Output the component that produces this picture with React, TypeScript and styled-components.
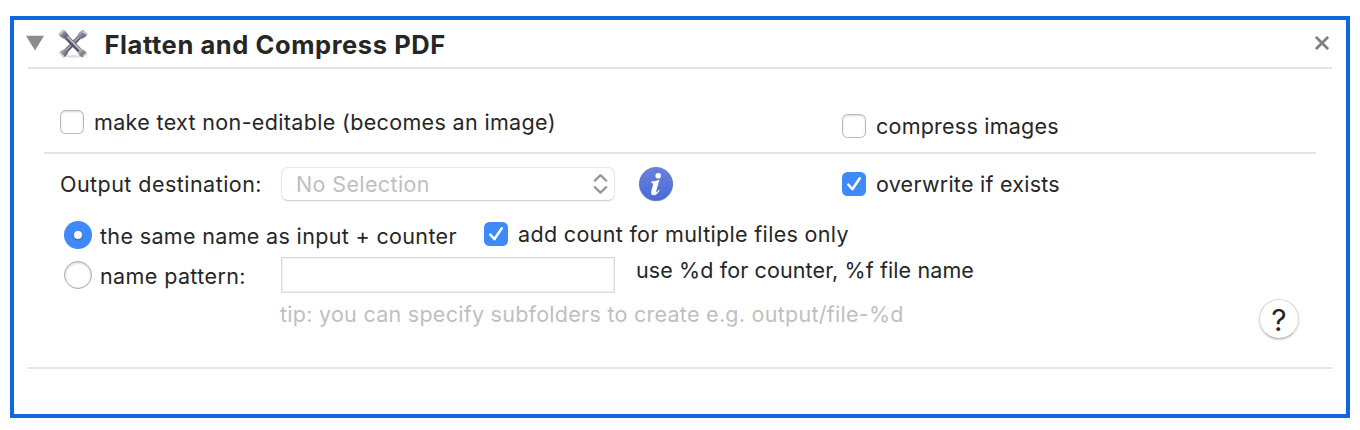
import React from "react";
import styled, { createGlobalStyle } from "styled-components";

const GlobalStyle = createGlobalStyle`
  * { box-sizing: border-box; }
  body {
    margin: 0;
    background: #fff;
    font-family: Inter, "Liberation Sans", sans-serif;
    color: #262626;
  }
`;

const Page = styled.main`
  height: 430px;
  padding: 16px 10px 12px;
`;

const Panel = styled.section`
  height: 402px;
  padding: 0 14px;
  border: 4px solid #1068e0;
  background: #fff;
`;

const Header = styled.header`
  display: flex;
  align-items: center;
  height: 49px;
  border-bottom: 2px solid #e4e4e4;
`;

const Disclosure = styled.svg`
  display: block;
  width: 18px;
  height: 16px;
  margin: 0 13px 1px -2px;
`;

const ToolIcon = styled.svg`
  display: block;
  width: 30px;
  height: 30px;
  margin: 0 16.5px 0 1px;
`;

const Title = styled.h1<{ $tracking: number }>`
  flex: 1;
  margin: 3px 0 0;
  font-size: 25.5px;
  font-weight: 700;
  line-height: 30px;
  letter-spacing: ${(p) => p.$tracking}px;
`;

const CloseButton = styled.button`
  display: flex;
  padding: 0;
  margin: 0 3px 1px 0;
  border: 0;
  background: none;
`;

const OptionsRow = styled.div`
  display: grid;
  grid-template-columns: 782px 1fr;
  height: 85px;
  margin: 0 16px;
  padding: 39px 0 0 16px;
  border-bottom: 2px solid #e4e4e4;
`;

const Settings = styled.div`
  height: 215px;
  padding: 0 16px 0 32px;
  border-bottom: 2px solid #e4e4e4;
`;

const Row = styled.div<{ $height: number }>`
  display: flex;
  align-items: center;
  height: ${(p) => p.$height}px;
`;

const Cell = styled.div<{ $width?: number; $drop?: number; $indent?: number }>`
  display: flex;
  align-items: center;
  flex: none;
  height: 28px;
  width: ${(p) => (p.$width ? `${p.$width}px` : "auto")};
  margin-top: ${(p) => p.$drop ?? 0}px;
  padding-left: ${(p) => p.$indent ?? 0}px;
`;

const Text = styled.span<{ $tracking: number; $muted?: boolean; $drop?: number }>`
  font-size: 21.5px;
  line-height: 28px;
  white-space: nowrap;
  color: ${(p) => (p.$muted ? "#bfbfbf" : "#262626")};
  letter-spacing: ${(p) => p.$tracking}px;
  margin-top: ${(p) => p.$drop ?? 0}px;
`;

const Box = styled.span<{ $checked?: boolean }>`
  display: flex;
  flex: none;
  width: 24px;
  height: 24px;
  margin-right: 10px;
  border: ${(p) => (p.$checked ? "0" : "1px solid #b9b9b9")};
  border-radius: 5.5px;
  background: ${(p) => (p.$checked ? "#3f8af8" : "#fff")};
  box-shadow: ${(p) => (p.$checked ? "none" : "inset 0 1px 2px rgba(0,0,0,.16)")};
`;

const Radio = styled.span<{ $checked?: boolean }>`
  display: flex;
  align-items: center;
  justify-content: center;
  flex: none;
  width: 28px;
  height: 28px;
  margin-right: 8px;
  border: ${(p) => (p.$checked ? "0" : "1px solid #a9a9a9")};
  border-radius: 50%;
  background: ${(p) => (p.$checked ? "#3f8af8" : "#fff")};
  box-shadow: ${(p) => (p.$checked ? "none" : "inset 0 1px 3px rgba(0,0,0,.2)")};

  &::after {
    content: "";
    width: 8px;
    height: 8px;
    border-radius: 50%;
    background: #fff;
    box-shadow: ${(p) => (p.$checked ? "0 1px 2px rgba(0,0,0,.3)" : "none")};
  }
`;

const Select = styled.div`
  display: flex;
  align-items: center;
  justify-content: space-between;
  width: 334px;
  height: 34px;
  padding: 0 6px 0 14px;
  border: 1px solid #e6e6e6;
  border-bottom-color: #d4d4d4;
  border-radius: 7px;
  background: #fff;
  box-shadow: 0 1px 1px rgba(0, 0, 0, 0.06);
`;

const InfoButton = styled.button`
  display: flex;
  padding: 0;
  margin: 0 0 0 22px;
  border: 0;
  background: none;
`;

const PatternInput = styled.input`
  flex: none;
  width: 334px;
  height: 36px;
  padding: 0 8px;
  border: 1px solid #dadada;
  box-shadow: inset 0 0 0 1px #f0f0f0;
  background: #fff;
  font: inherit;
`;

const TipRow = styled.div`
  display: flex;
  justify-content: space-between;
  height: 71px;
  padding: 6px 17px 0 220px;
`;

const HelpButton = styled.button`
  width: 40px;
  height: 40px;
  margin-top: -1px;
  padding: 1px 0 0;
  border: 1px solid #d9d9d9;
  border-bottom-color: #bcbcbc;
  border-radius: 50%;
  background: #fff;
  box-shadow: 0 1px 2px rgba(0, 0, 0, 0.18);
  color: #262626;
  font: 400 30px/34px Inter, sans-serif;
`;

const Tick = () => (
  <svg width="24" height="24" viewBox="0 0 24 24" fill="none">
    <path d="M6.3 13.3 L10.4 18 L17.8 6.5" stroke="#2866c4" strokeOpacity=".35" strokeWidth="2.6" strokeLinecap="round" strokeLinejoin="round" />
    <path d="M6.3 12.6 L10.4 17.3 L17.8 6.2" stroke="#fff" strokeWidth="2.5" strokeLinecap="round" strokeLinejoin="round" />
  </svg>
);

type CheckProps = { label: string; tracking: number; checked?: boolean };

const Checkbox = ({ label, tracking, checked }: CheckProps) => (
  <>
    <Box $checked={checked} role="checkbox" aria-checked={!!checked}>
      {checked && <Tick />}
    </Box>
    <Text $tracking={tracking}>{label}</Text>
  </>
);

const CrossedWrenches = () => (
  <ToolIcon viewBox="0 0 30 30" fill="none">
    <defs>
      <linearGradient id="steel" x1="0" y1="0" x2="1" y2="1">
        <stop offset="0" stopColor="#d2d2da" />
        <stop offset=".5" stopColor="#83838e" />
        <stop offset="1" stopColor="#484852" />
      </linearGradient>
    </defs>
    <ellipse cx="15" cy="27.4" rx="10" ry="1.3" fill="#dedede" />
    <path d="M6 24 L24 5.5" stroke="#626173" strokeWidth="4.4" />
    <path d="M6 23.2 L23.6 5.2" stroke="#a9a8c6" strokeWidth="1.5" />
    <path d="M1 23.6 Q4 20.4 7.5 20 L10.4 23.2 Q9.5 26.5 5.6 28.6Z" fill="url(#steel)" />
    <path d="M19.8 6.5 Q21 3.2 25 1.2 L29.2 5 Q27.5 8.6 23.4 9.6Z" fill="url(#steel)" stroke="#8c84bd" strokeWidth=".8" />
    <path d="M6 5.5 L24 24" stroke="#575665" strokeWidth="4.8" />
    <path d="M6.8 5.2 L24.4 23" stroke="#bdbcca" strokeWidth="1.8" />
    <path d="M.8 5 L5 1 Q9 3 10.4 6.4 L6.8 9.8 Q2.8 8.8 .8 5Z" fill="url(#steel)" stroke="#8c84bd" strokeWidth=".8" />
    <path d="M19.6 23.4 L23 20 Q27 20.8 29 24.6 L25 28.6 Q20.8 26.8 19.6 23.4Z" fill="url(#steel)" />
    <path d="M1.8 5 L5 2 M25.2 2.4 L28 5 M2.4 24 L5.6 27.2 M25 27.2 L28 24.4" stroke="#d3d2dc" strokeWidth="1.5" strokeLinecap="round" />
  </ToolIcon>
);

export default function App() {
  return (
    <>
      <GlobalStyle />
      <Page>
        <Panel>
          <Header>
            <Disclosure viewBox="0 0 18 16">
              <path d="M0 .8 H18 L9 15.4Z" fill="#8c8c8c" />
            </Disclosure>
            <CrossedWrenches />
            <Title $tracking={0.58}>Flatten and Compress PDF</Title>
            <CloseButton aria-label="Close">
              <svg width="14" height="14" viewBox="0 0 14 14">
                <path d="M.9 .9 L13.1 13.1 M13.1 .9 L.9 13.1" stroke="#808080" strokeWidth="2.8" />
              </svg>
            </CloseButton>
          </Header>

          <OptionsRow>
            <Cell>
              <Checkbox label="make text non-editable (becomes an image)" tracking={0.34} />
            </Cell>
            <Cell $drop={4}>
              <Checkbox label="compress images" tracking={0.23} />
            </Cell>
          </OptionsRow>

          <Settings>
            <Row $height={60}>
              <Cell $width={221}>
                <Text $tracking={0.46}>Output destination:</Text>
              </Cell>
              <Cell $width={561}>
                <Select>
                  <Text $tracking={0.38} $muted>No Selection</Text>
                  <svg width="15" height="22" viewBox="0 0 15 22" fill="none">
                    <path d="M1.8 7.6 L7.5 2.2 L13.2 7.6 M1.8 14.2 L7.5 19.6 L13.2 14.2" stroke="#999" strokeWidth="2.4" strokeLinecap="round" strokeLinejoin="round" />
                  </svg>
                </Select>
                <InfoButton aria-label="Info">
                  <svg width="38" height="38" viewBox="0 0 38 38">
                    <defs>
                      <linearGradient id="info" x1="0" y1="0" x2="0" y2="1">
                        <stop offset="0" stopColor="#6882dc" />
                        <stop offset="1" stopColor="#496bd8" />
                      </linearGradient>
                    </defs>
                    <circle cx="19" cy="19.6" r="17" fill="#000" fillOpacity=".2" />
                    <circle cx="19" cy="19" r="16.6" fill="url(#info)" stroke="#5a6eb8" strokeWidth=".7" />
                    <circle cx="21.2" cy="10.8" r="2.8" fill="#fff" />
                    <path d="M14.4 16.6 Q18.8 16.2 22.4 14.8 L19.2 26 Q18.9 27.6 19.9 27 Q20.9 26.2 21.8 24.7 L22.7 25.2 Q20 30.2 16.6 30.2 Q13.4 30 14.2 26.4 L16.1 19.6 Q16.3 18 14.2 17.8Z" fill="#fff" />
                  </svg>
                </InfoButton>
              </Cell>
              <Cell>
                <Checkbox label="overwrite if exists" tracking={0.24} checked />
              </Cell>
            </Row>

            <Row $height={42}>
              <Cell $width={424} $indent={4}>
                <Radio $checked role="radio" aria-checked />
                <Text $tracking={0.34} $drop={2}>the same name as input + counter</Text>
              </Cell>
              <Cell $drop={-2}>
                <Checkbox label="add count for multiple files only" tracking={0.33} checked />
              </Cell>
            </Row>

            <Row $height={38}>
              <Cell $width={221} $indent={4}>
                <Radio role="radio" aria-checked={false} />
                <Text $tracking={0.39} $drop={2}>name pattern:</Text>
              </Cell>
              <PatternInput aria-label="name pattern" />
              <Cell $indent={21} $drop={-10}>
                <Text $tracking={0.11}>use %d for counter, %f file name</Text>
              </Cell>
            </Row>

            <TipRow>
              <Text $tracking={0.27} $muted>tip: you can specify subfolders to create e.g. output/file-%d</Text>
              <HelpButton aria-label="Help">?</HelpButton>
            </TipRow>
          </Settings>
        </Panel>
      </Page>
    </>
  );
}
